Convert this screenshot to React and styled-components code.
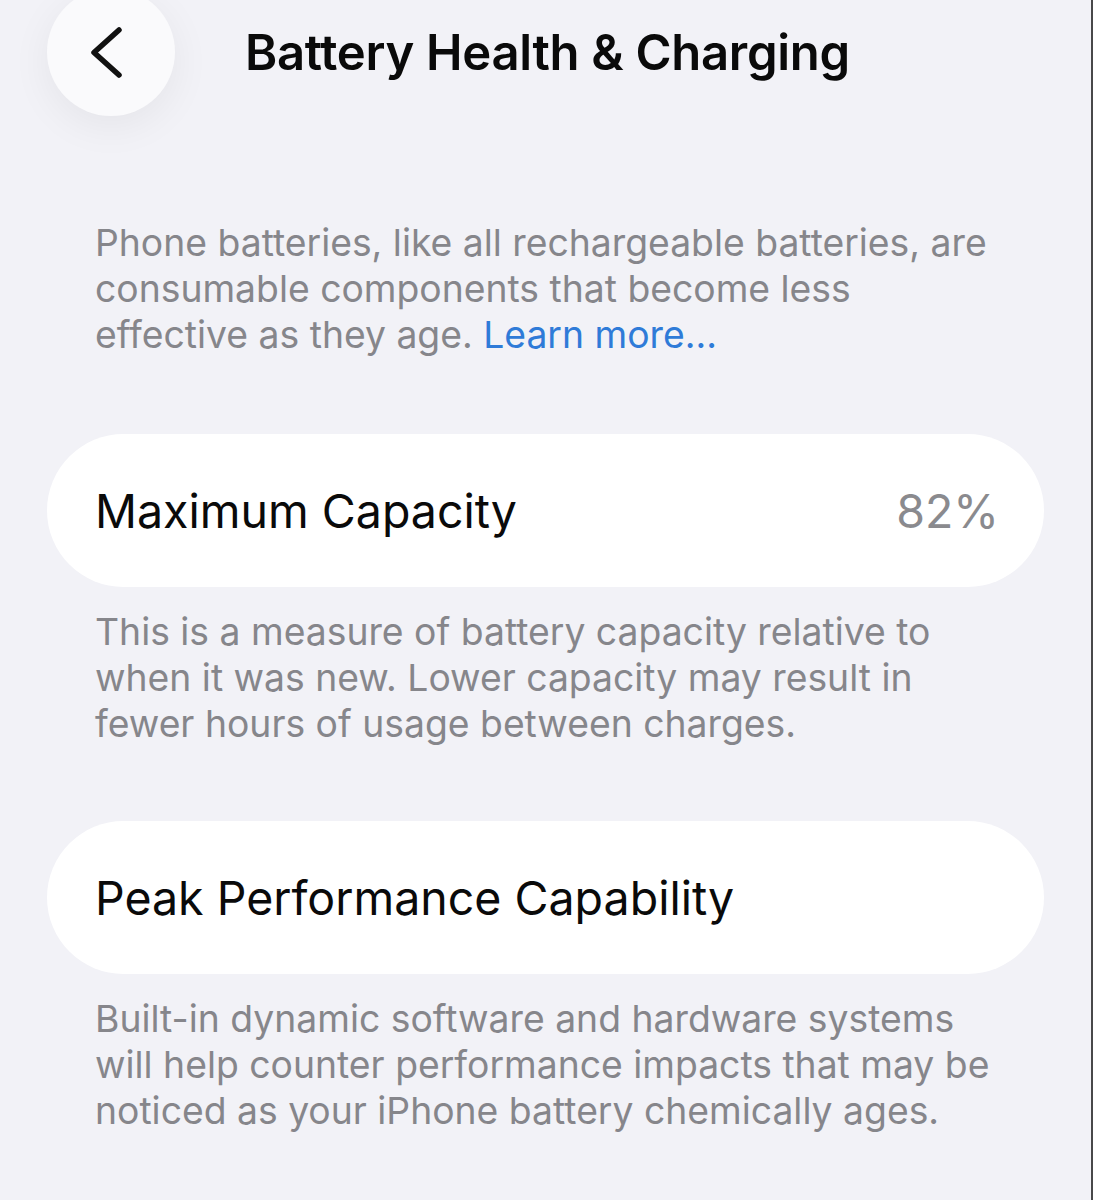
import React from 'react';
import styled, { createGlobalStyle } from 'styled-components';

const GlobalStyle = createGlobalStyle`
  html, body {
    margin: 0;
    padding: 0;
    background: #f2f2f7;
  }
  body {
    font-family: Inter, "Noto Sans", "Liberation Sans", sans-serif;
    -webkit-font-smoothing: antialiased;
  }
`;

const Screen = styled.div`
  box-sizing: border-box;
  width: 1093px;
  height: 1200px;
  overflow: hidden;
  background: #f2f2f7;
  border-right: 2px solid #48484a;
`;

const Header = styled.div`
  display: flex;
  align-items: center;
  padding-left: 47px;
  margin-top: -12px;
  height: 128px;
`;

const BackButton = styled.button`
  display: flex;
  align-items: center;
  justify-content: center;
  flex: none;
  width: 128px;
  height: 128px;
  padding: 0;
  border: none;
  border-radius: 50%;
  background: #fafafc;
  box-shadow: 0 10px 40px rgba(0, 0, 0, 0.06);
`;

const Title = styled.h1`
  margin: 0 0 0 70px;
  font-size: 49px;
  font-weight: 600;
  letter-spacing: -0.3px;
  color: #0a0a0a;
`;

const Content = styled.div`
  padding: 0 47px;
`;

const Footnote = styled.p`
  margin: ${p => p.top}px 0 0;
  padding-left: 48px;
  font-size: 37.3px;
  line-height: 46px;
  color: #86868b;
`;

const Link = styled.a`
  color: #2f7bd8;
  text-decoration: none;
`;

const Card = styled.div`
  display: flex;
  align-items: center;
  justify-content: space-between;
  height: 153px;
  margin-top: ${p => p.top}px;
  padding: 0 45px 0 48px;
  border-radius: 77px;
  background: #ffffff;
`;

const Label = styled.span`
  font-size: 46.5px;
  color: #0a0a0a;
`;

const Value = styled.span`
  font-size: 46.5px;
  color: #8a8a8e;
`;

// back chevron, tip a little left of the circle centre like iOS
const Chevron = () => (
  <svg width="40" height="60" viewBox="0 0 40 60" fill="none">
    <path d="M28 8 L3 30.5 L28 53" stroke="#111" strokeWidth="5.5" strokeLinecap="round" strokeLinejoin="round" />
  </svg>
);

export default function App() {
  return (
    <Screen>
      <GlobalStyle />
      <Header>
        <BackButton aria-label="Back">
          <Chevron />
        </BackButton>
        <Title>Battery Health &amp; Charging</Title>
      </Header>
      <Content>
        <Footnote top={104}>
          Phone batteries, like all rechargeable batteries, are<br />
          consumable components that become less<br />
          effective as they age. <Link href="#">Learn more…</Link>
        </Footnote>
        <Card top={76}>
          <Label>Maximum Capacity</Label>
          <Value>82%</Value>
        </Card>
        <Footnote top={22}>
          This is a measure of battery capacity relative to<br />
          when it was new. Lower capacity may result in<br />
          fewer hours of usage between charges.
        </Footnote>
        <Card top={74}>
          <Label>Peak Performance Capability</Label>
        </Card>
        <Footnote top={22}>
          Built-in dynamic software and hardware systems<br />
          will help counter performance impacts that may be<br />
          noticed as your iPhone battery chemically ages.
        </Footnote>
      </Content>
    </Screen>
  );
}
